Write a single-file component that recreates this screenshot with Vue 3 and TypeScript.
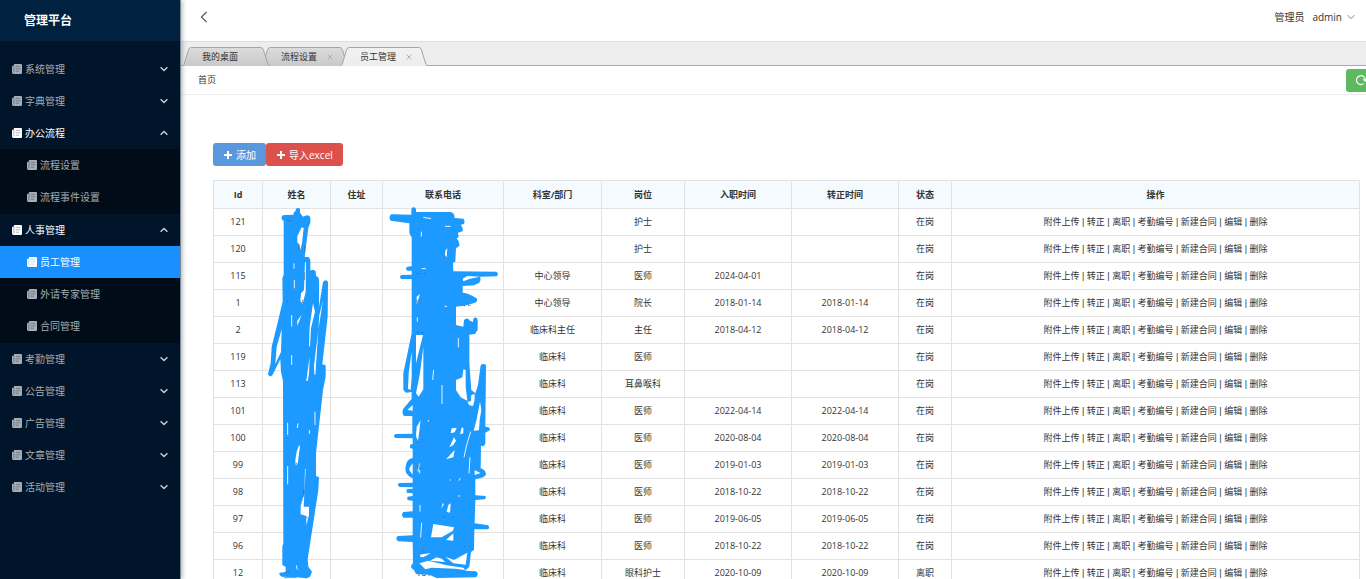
<script setup lang="ts">
import { ref } from 'vue'

interface MenuItem {
  name: string
  open?: boolean
  children?: string[]
}

interface Employee {
  id: number
  phone?: string
  dept: string
  post: string
  joined: string
  regular: string
  status: string
}

const menu = ref<MenuItem[]>([
  { name: '系统管理' },
  { name: '字典管理' },
  { name: '办公流程', open: true, children: ['流程设置', '流程事件设置'] },
  { name: '人事管理', open: true, children: ['员工管理', '外请专家管理', '合同管理'] },
  { name: '考勤管理' },
  { name: '公告管理' },
  { name: '广告管理' },
  { name: '文章管理' },
  { name: '活动管理' },
])
const current = ref('员工管理')

const tabs = [
  { name: '我的桌面', closable: false },
  { name: '流程设置', closable: true },
  { name: '员工管理', closable: true },
]

const columns = ['Id', '姓名', '住址', '联系电话', '科室/部门', '岗位', '入职时间', '转正时间', '状态', '操作']
const actions = ['附件上传', '转正', '离职', '考勤编号', '新建合同', '编辑', '删除']

const row = (
  id: number, dept: string, post: string, joined = '', regular = '', status = '在岗', phone = '',
): Employee => ({ id, dept, post, joined, regular, status, phone })

const employees: Employee[] = [
  row(121, '', '护士'),
  row(120, '', '护士'),
  row(115, '中心领导', '医师', '2024-04-01'),
  row(1, '中心领导', '院长', '2018-01-14', '2018-01-14'),
  row(2, '临床科主任', '主任', '2018-04-12', '2018-04-12'),
  row(119, '临床科', '医师'),
  row(113, '临床科', '耳鼻喉科'),
  row(101, '临床科', '医师', '2022-04-14', '2022-04-14'),
  row(100, '临床科', '医师', '2020-08-04', '2020-08-04'),
  row(99, '临床科', '医师', '2019-01-03', '2019-01-03'),
  row(98, '临床科', '医师', '2018-10-22', '2018-10-22'),
  row(97, '临床科', '医师', '2019-06-05', '2019-06-05'),
  row(96, '临床科', '医师', '2018-10-22', '2018-10-22'),
  row(12, '临床科', '眼科护士', '2020-10-09', '2020-10-09', '离职', '1010'),
]
</script>

<template>
  <div class="app">
    <aside class="sidebar">
      <div class="brand">管理平台</div>
      <nav class="menu">
        <div v-for="m in menu" :key="m.name">
          <button class="item" :class="{ opened: m.open }" type="button" @click="m.open = !m.open">
            <svg class="doc" viewBox="0 0 10 10" aria-hidden="true">
              <path d="M2.6 0H9Q10 0 10 1V9Q10 10 9 10H1.4Q0 10 0 8.6V2.6Q0 1.8 .8 1.8H1.8V1Q1.8 0 2.6 0Z" />
              <path class="cut" d="M1.9 2V8.4M3.7 2.4H8.3M3.7 4.8H8.3M3.7 7.2H7" />
            </svg>
            <span class="label">{{ m.name }}</span>
            <svg class="arrow" viewBox="0 0 8 6" aria-hidden="true">
              <path :d="m.open ? 'M.6 4.8L4 1.4L7.4 4.8' : 'M.6 1.2L4 4.6L7.4 1.2'" />
            </svg>
          </button>
          <div v-if="m.open && m.children" class="sub">
            <a
              v-for="c in m.children" :key="c" href="#" class="item child"
              :class="{ active: c === current }" @click.prevent="current = c"
            >
              <svg class="doc" viewBox="0 0 10 10" aria-hidden="true">
                <path d="M2.6 0H9Q10 0 10 1V9Q10 10 9 10H1.4Q0 10 0 8.6V2.6Q0 1.8 .8 1.8H1.8V1Q1.8 0 2.6 0Z" />
                <path class="cut" d="M1.9 2V8.4M3.7 2.4H8.3M3.7 4.8H8.3M3.7 7.2H7" />
              </svg>
              <span class="label">{{ c }}</span>
            </a>
          </div>
        </div>
      </nav>
    </aside>

    <main class="main">
      <header class="topbar">
        <button class="plain" type="button" aria-label="收起菜单">
          <svg class="back" viewBox="0 0 8 12" aria-hidden="true"><path d="M6.6 1L1.4 6L6.6 11" /></svg>
        </button>
        <div class="user">
          <span>管理员</span>
          <button class="plain account" type="button">
            admin
            <svg class="caret" viewBox="0 0 8 6" aria-hidden="true"><path d="M.6 1.2L4 4.6L7.4 1.2" /></svg>
          </button>
        </div>
      </header>

      <div class="tabs">
        <div v-for="(t, i) in tabs" :key="t.name" class="tab" :class="['tab-' + i, { on: t.name === current }]">
          <svg class="shape" viewBox="0 0 88 19" aria-hidden="true">
            <defs>
              <linearGradient :id="'tab-fill-' + i" x1="0" y1="0" x2="0" y2="1">
                <stop offset="0" :stop-color="t.name === current ? '#f1f1f2' : '#dcdcdd'" />
                <stop offset="1" :stop-color="t.name === current ? '#ededee' : '#c9c9ca'" />
              </linearGradient>
            </defs>
            <path
              :fill="`url(#tab-fill-${i})`"
              d="M0 19Q1.6 18.6 2.2 17L6.6 2.6Q7.2 .5 9.4 .5H78.6Q80.8 .5 81.4 2.6L85.8 17Q86.4 18.6 88 19"
            />
          </svg>
          <button class="plain name" type="button">{{ t.name }}</button>
          <button v-if="t.closable" class="plain close" type="button" :aria-label="'关闭' + t.name">
            <svg viewBox="0 0 6 6" aria-hidden="true"><path d="M.6 .6L5.4 5.4M5.4 .6L.6 5.4" /></svg>
          </button>
        </div>
      </div>

      <div class="crumbs">
        <a href="#">首页</a>
        <button class="refresh" type="button" aria-label="刷新">
          <svg viewBox="0 0 12 12" aria-hidden="true">
            <path d="M8.6 9.6A4.4 4.4 0 1 1 10.3 6.4" /><path d="M8.4 5.2L10.3 7L11.8 4.8" />
          </svg>
        </button>
      </div>

      <section class="content">
        <div class="buttons">
          <button class="btn add" type="button">
            <svg viewBox="0 0 8 8" aria-hidden="true"><path d="M4 0V8M0 4H8" /></svg>添加
          </button>
          <button class="btn import" type="button">
            <svg viewBox="0 0 8 8" aria-hidden="true"><path d="M4 0V8M0 4H8" /></svg>导入excel
          </button>
        </div>

        <div class="sheet">
          <table>
            <colgroup>
              <col class="w-id"><col class="w-name"><col class="w-addr"><col class="w-phone"><col class="w-dept">
              <col class="w-post"><col class="w-date"><col class="w-date"><col class="w-status"><col>
            </colgroup>
            <thead>
              <tr><th v-for="c in columns" :key="c" scope="col">{{ c }}</th></tr>
            </thead>
            <tbody>
              <tr v-for="e in employees" :key="e.id">
                <td>{{ e.id }}</td>
                <td></td>
                <td></td>
                <td class="phone">{{ e.phone }}</td>
                <td>{{ e.dept }}</td>
                <td>{{ e.post }}</td>
                <td>{{ e.joined }}</td>
                <td>{{ e.regular }}</td>
                <td>{{ e.status }}</td>
                <td class="actions">
                  <template v-for="(a, i) in actions" :key="a"><template v-if="i"> | </template><a href="#">{{ a }}</a></template>
                </td>
              </tr>
            </tbody>
          </table>

          <svg class="marker" viewBox="213 180 300 405" aria-hidden="true">
            <g transform="translate(255 200) scale(.33333)">
              <path
                class="ink"
                d="M80 50Q82 44 90 45L115 44L117 36L121 34L123 26Q129 22 135 26L135 38L144 50L155 46Q166 46 166 56L166 68L160 84L149 170L162 172L166 180L166 212Q175 205 182 214L183 228Q191 230 192 240L192 320L204 246Q212 236 219 246L218 350L202 493L212 496L212 530L204 570L183 760L183 828L192 832L190 870L170 1000L158 1077L160 1100L171 1115L165 1130L155 1135L125 1132L80 1130Q70 1124 74 1118L92 1116L92 1100L82 1095L82 1040L85 1030L84 544L78 515L76 478L52 526Q44 534 39 522L47 490L50 440L70 360L83 304L82 235L86 225V62Q78 60 80 50Z"
              />
              <path
                class="gap"
                d="M140 82L127 108L127 128L133 132L136 150L141 130L146 84ZM150 185L153 188L152 276L143 312L136 302L138 280L147 270ZM80 388L65 440L61 492L78 456ZM140 344L127 362L127 378ZM174 310L180 335L168 385L165 440L162 438L164 380ZM204 300L193 345L181 525L178 523L177 498L190 390ZM164 468L162 520L158 545L154 543ZM132 736L125 755L121 780L122 795L128 792L135 738ZM150 806L148 880L137 918L137 943L154 948L154 976L162 945V920L146 920L152 806Z"
              />
              <path
                class="slit"
                d="M117 190V206M118 240V265M110 345V380M110 465V495M180 635V675M163 690V702M129 670L127 684M98 668V710M98 798V853M124 1096L127 1109"
              />
              <path class="speck" d="M97 62H110M131 138V150M149 140V158M149 217V240M96 304H102M143 300V310M155 545H160M98 705V714M146 870V890M154 952L160 956M124 790H127M92 1116H104M88 1133H125" />
            </g>
            <g transform="translate(380 200) scale(.33333)">
              <path
                class="ink"
                d="M94 30Q94 22 101 22Q108 22 108 30V36H212Q224 38 224 54L250 56Q256 62 252 72L242 74Q250 82 248 94L234 98L236 112L230 115Q240 126 238 138L228 145L226 185L219 188L220 214L350 215Q357 222 350 229L300 230Q304 240 298 248L282 256L248 258V278Q268 280 290 295Q294 305 285 308L262 315L228 320V375L250 380L252 360Q262 350 270 362L279 366L280 356Q290 348 293 360V390L285 402L268 404V490L274 570L286 580L294 555L302 496Q310 488 318 496L316 680Q330 680 330 690L316 698V732Q308 744 303 736L302 805Q318 810 318 824L310 832L286 838V886L316 888Q320 894 314 898L286 900L284 970L325 976Q330 984 324 988L283 988L282 1050L273 1056L268 1100L255 1112L288 1114Q298 1122 288 1132L170 1134L148 1124L108 1122L102 1110L94 1104Q92 1094 99 1090L98 1026L54 1024Q44 1014 54 1008L98 1006V953L70 953Q62 944 70 936L98 934V902L82 900V890L98 888V880L80 878V868L98 866V862L58 861Q50 854 58 849L98 848V834Q76 826 76 806Q78 776 98 774V746L90 744V734L98 732V715L46 714Q38 708 46 702L97 701V648L72 648Q64 640 70 626L95 596V576L80 578Q68 574 70 560V520L95 400V237L64 237Q56 231 64 225L95 224V212L82 212Q74 206 82 200L95 199V112L88 100V70L32 62Q24 50 34 43L94 44Z"
              />
              <path
                class="gap"
                d="M108 405H129L118 450L108 490ZM95 455L86 520L84 566L92 570L95 530ZM130 440V568L116 590L108 580L120 520ZM120 282L110 290V315ZM228 540L247 532L250 508L257 510V560L262 602L242 592L228 570ZM274 585L284 582V598L272 612ZM262 606L284 600L279 618L268 616ZM202 145L196 152L195 165L200 172ZM262 228L248 236L250 244L270 236L300 230ZM300 605L290 658L281 692L297 691L299 660L304 630ZM215 685L230 684L224 697L212 700ZM245 683L250 683L250 700L240 703ZM222 712L228 722L220 735L208 742ZM224 750L220 772L198 778ZM98 790L88 804L89 812L98 824ZM284 811L302 819L284 825ZM98 615L82 630L98 632ZM122 660L110 680L108 708L114 725ZM212 910L210 938L200 935L205 915ZM192 912L184 926L188 910ZM160 972L222 982L219 992L185 1012L153 1012ZM220 1000V1022L198 1020ZM124 1045L121 1064L130 1062L152 1060L130 1072L120 1070ZM170 1072L185 1076L196 1086L150 1082ZM196 1070L222 1080L262 1058L257 1094L220 1090ZM118 1090L145 1082L200 1096L250 1103L256 1110L225 1106L155 1103L136 1108Z"
              />
              <path
                class="slit"
                d="M124 95V110M195 79H212M130 52L153 56M125 206H138M194 319H201M112 352V365M235 414V442M161 510L158 540M186 555V612M272 695L260 735L252 772M270 772L267 820M118 790L114 815M119 810V820M120 915V935M125 968L122 1012M241 834L237 842M211 838V842M237 885V891M145 660V665"
              />
              <path class="speck" d="M110 221H118M132 222H136M245 317H258M264 316H272M111 300V308M112 397H118M123 398H131M114 718V728M114 790V805M191 951H196M218 951H222M250 1040H255M126 1050H132M232 1116H238" />
            </g>
          </svg>
        </div>
      </section>
    </main>
  </div>
</template>

<style>
body {
  margin: 0;
}
</style>

<style scoped>
.app {
  display: flex;
  height: 100vh;
  overflow: hidden;
  background: #fff;
  color: #333;
  font: 9px/14px "Open Sans", "Noto Sans CJK SC", sans-serif;
}
button {
  font: inherit;
  color: inherit;
  border: 0;
  cursor: pointer;
}
a {
  color: inherit;
  text-decoration: none;
}
svg {
  display: block;
  flex: none;
}
.plain {
  padding: 0;
  background: none;
}

.sidebar {
  flex: none;
  width: 180px;
  background: #001529;
  color: #a6adb4;
  font-size: 10px;
  border-right: 1px solid #7a8895;
  box-shadow: 1px 0 5px rgba(0, 21, 41, 0.35);
  z-index: 1;
}
.brand {
  height: 41px;
  padding-left: 24px;
  background: #002140;
  color: #fff;
  font-size: 12px;
  font-weight: 700;
  line-height: 41px;
}
.menu {
  padding-top: 12px;
}
.item {
  display: flex;
  align-items: center;
  gap: 3px;
  box-sizing: border-box;
  width: 100%;
  height: 32px;
  padding: 0 12px;
  background: none;
  text-align: left;
}
.item.child {
  padding-left: 27px;
}
.opened,
.active {
  color: #fff;
}
.active {
  background: #1890ff;
}
.sub {
  padding-bottom: 1px;
  background: #000c17;
}
.label {
  flex: 1;
}
.doc {
  width: 10px;
  height: 10px;
  fill: currentColor;
}
.doc .cut {
  fill: none;
  stroke: #001529;
  stroke-opacity: 0.4;
  stroke-width: 0.8;
}
.active .cut {
  stroke: #1890ff;
}
.arrow,
.caret {
  width: 8px;
  height: 6px;
  fill: none;
  stroke: #c9ced3;
  stroke-width: 1.4;
}
.caret {
  stroke: #777;
  stroke-width: 0.9;
}

.main {
  flex: 1;
  min-width: 0;
}
.topbar {
  display: flex;
  align-items: center;
  justify-content: space-between;
  height: 34px;
  padding: 0 11px 7px 19px;
  border-bottom: 1px solid #dedede;
}
.back {
  width: 8px;
  height: 12px;
  fill: none;
  stroke: #555;
  stroke-width: 1.1;
}
.user,
.account {
  display: flex;
  align-items: center;
}
.user {
  gap: 8px;
  font-size: 10px;
}
.account {
  gap: 5px;
}

.tabs {
  display: flex;
  height: 18px;
  padding: 5px 0 0 1px;
  background: #ededee;
  border-bottom: 1px solid #ababab;
}
.tab {
  position: relative;
  display: flex;
  align-items: center;
  box-sizing: border-box;
  width: 88px;
  height: 19px;
  padding-left: 20px;
  margin-right: -9px;
}
.tab-0 {
  z-index: 2;
}
.tab-1 {
  z-index: 1;
}
.tab.on {
  z-index: 3;
}
.shape {
  position: absolute;
  inset: 0;
  width: 88px;
  height: 19px;
  stroke: #a3a3a3;
}
.name,
.close {
  position: relative;
}
.close {
  margin-left: 10px;
}
.close svg {
  width: 6px;
  height: 6px;
  stroke: #a5adb5;
  stroke-width: 0.9;
}

.crumbs {
  display: flex;
  align-items: center;
  justify-content: space-between;
  height: 28px;
  padding-left: 17px;
  border-bottom: 1px solid #eee;
  overflow: hidden;
}
.refresh {
  width: 34px;
  height: 23px;
  margin-right: -14px;
  padding: 0 9px;
  border-radius: 3px;
  background: #5eb95e;
}
.refresh svg {
  width: 12px;
  height: 12px;
  fill: none;
  stroke: #fff;
  stroke-width: 1.2;
}

.content {
  padding: 48px 6px 0 32px;
}
.buttons {
  display: flex;
  margin-bottom: 14px;
}
.btn {
  display: flex;
  align-items: center;
  gap: 4px;
  height: 23px;
  padding: 0 10px 0 11px;
  border-radius: 3px;
  color: #fff;
  font-size: 10px;
}
.btn svg {
  width: 8px;
  height: 8px;
  stroke: #fff;
  stroke-width: 2;
}
.add {
  background: #5a98de;
}
.import {
  background: #dd514c;
}

.sheet {
  position: relative;
}
table {
  width: 100%;
  table-layout: fixed;
  border-collapse: collapse;
}
th,
td {
  height: 26px;
  padding: 0;
  border: 1px solid #e2e2e2;
  text-align: center;
  line-height: 14px;
  white-space: nowrap;
}
th {
  height: 27px;
  background: #f5fafe;
  font-weight: 700;
}
.phone {
  padding-left: 33px;
  text-align: left;
}
.actions {
  font-family: "Liberation Sans", "Noto Sans CJK SC", sans-serif;
}
.w-id { width: 49px; }
.w-name { width: 68px; }
.w-addr { width: 52px; }
.w-phone { width: 121px; }
.w-dept { width: 98px; }
.w-post { width: 83px; }
.w-date { width: 107px; }
.w-status { width: 53px; }

.marker {
  position: absolute;
  top: 0;
  left: 0;
  width: 300px;
  height: 405px;
  pointer-events: none;
}
.ink {
  fill: #1c9aff;
}
.gap {
  fill: #fff;
}
.slit {
  fill: none;
  stroke: #e8f4ff;
  stroke-width: 3;
}
.speck {
  fill: none;
  stroke: #57606b;
  stroke-width: 3;
  stroke-dasharray: 4 2;
}
</style>
